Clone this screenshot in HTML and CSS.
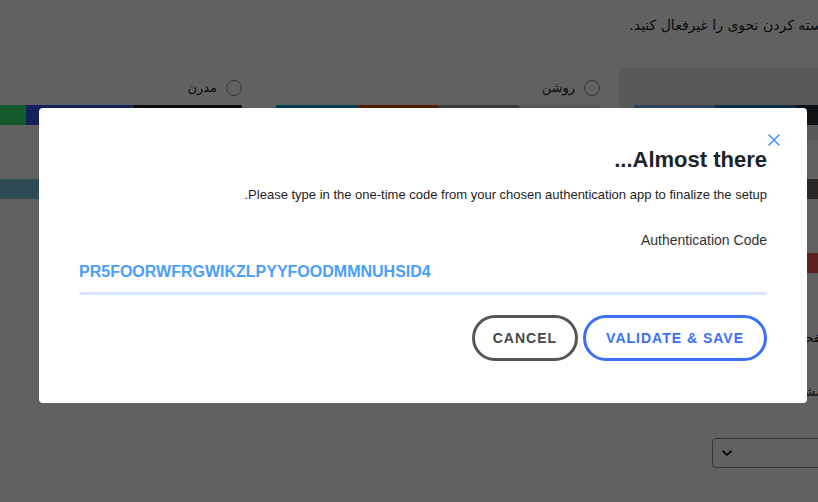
FILE: index.html
```html
<!DOCTYPE html>
<html lang="fa">
<head>
<meta charset="utf-8">
<title>شناسنامه</title>
<link rel="stylesheet" href="styles.css">
</head>
<body>
<div class="page" dir="rtl">
  <div class="text-row syntax-row">
    <span class="checkbox"></span>
    <span>هنگام ویرایش کد، برجسته کردن نحوی را غیرفعال کنید.</span>
  </div>

  <div class="color-picker">
    <div class="color-option selected">
      <div class="option-head"><span class="radio"></span><span>پیش‌فرض</span></div>
      <div class="palette fresh"><span></span><span></span><span></span><span></span></div>
    </div>
    <div class="color-option">
      <div class="option-head"><span class="radio"></span><span>روشن</span></div>
      <div class="palette light"><span></span><span></span><span></span><span></span></div>
    </div>
    <div class="color-option">
      <div class="option-head"><span class="radio"></span><span>مدرن</span></div>
      <div class="palette modern"><span></span><span></span><span></span></div>
    </div>
    <div class="color-option">
      <div class="option-head"><span class="radio"></span><span>قهوه‌ای</span></div>
      <div class="palette coffee"><span></span><span></span><span></span><span></span></div>
    </div>
    <div class="color-option">
      <div class="option-head"><span class="radio"></span><span>اکتوپلاسم</span></div>
      <div class="palette ectoplasm"><span></span><span></span><span></span><span></span></div>
    </div>
    <div class="color-option">
      <div class="option-head"><span class="radio"></span><span>نیمه‌شب</span></div>
      <div class="palette midnight"><span></span><span></span><span></span><span></span></div>
    </div>
    <div class="color-option">
      <div class="option-head"><span class="radio"></span><span>طلوع</span></div>
      <div class="palette sunrise"><span></span><span></span><span></span><span></span></div>
    </div>
  </div>

  <div class="text-row shortcuts-row">
    <span class="checkbox"></span>
    <span>فعال کردن میانبرهای صفحه‌کلید برای مدیریت دیدگاه‌ها.</span>
  </div>

  <div class="text-row toolbar-row">
    <span class="checkbox"></span>
    <span>نمایش نوار ابزار هنگام مشاهدهٔ سایت</span>
  </div>

  <div class="lang-row">
    <div class="select">
      <span class="select-value">فارسی</span>
      <svg class="select-arrow" width="12" height="8" viewBox="0 0 12 8" aria-hidden="true">
        <path d="M1.5 1.8 L6 6 L10.5 1.8" fill="none" stroke="#1d2327" stroke-width="2"/>
      </svg>
    </div>
  </div>
</div>

<div class="backdrop"></div>

<div class="modal" dir="rtl">
  <button class="modal-close" aria-label="Close">
    <svg width="14" height="14" viewBox="0 0 14 14" aria-hidden="true">
      <path d="M1.5 1.5 L12.5 12.5 M12.5 1.5 L1.5 12.5" stroke="#4a9df2" stroke-width="1.7" fill="none"/>
    </svg>
  </button>
  <h2 class="modal-title">Almost there...</h2>
  <p class="modal-desc">Please type in the one-time code from your chosen authentication app to finalize the setup.</p>
  <div class="field">
    <label for="code">Authentication Code</label>
    <input id="code" type="text" value="PR5FOORWFRGWIKZLPYYFOODMMNUHSID4">
  </div>
  <div class="actions">
    <button class="btn btn-primary">Validate &amp; Save</button>
    <button class="btn btn-cancel">Cancel</button>
  </div>
</div>
</body>
</html>
```
FILE: styles.css
```css
html, body {
  margin: 0;
  height: 100%;
  overflow: hidden;
}

body {
  background: #fff;
  font-family: "DejaVu Sans", sans-serif;
  font-size: 13px;
  color: #1d2327;
}

/* underlying RTL profile page (partly scrolled out of view) */
.page {
  width: 1070px;
  margin-left: -97px;
  direction: rtl;
}

.text-row {
  display: flex;
  align-items: center;
  gap: 6px;
  height: 20px;
  line-height: 20px;
  padding-right: 2px;
}

.checkbox {
  width: 16px;
  height: 16px;
  box-sizing: border-box;
  border: 1px solid #8c8f94;
  border-radius: 4px;
  background: #fff;
  flex: none;
}

.syntax-row {
  margin-top: 15px;
  font-size: 14px;
  padding-right: 0;
}

.color-picker {
  margin-top: 33px;
  display: flex;
  flex-wrap: wrap;
  gap: 2px 4px;
}

.color-option {
  width: 354px;
  box-sizing: border-box;
  padding: 5px 15px 15px;
}

.color-option.selected {
  background: #e6e6e6;
}

.option-head {
  height: 29px;
  display: flex;
  align-items: center;
  gap: 9px;
}

.radio {
  width: 16px;
  height: 16px;
  box-sizing: border-box;
  border: 1px solid #8c8f94;
  border-radius: 50%;
  background: #fff;
  flex: none;
}

.palette {
  display: flex;
  height: 20px;
  margin-top: 3px;
}

.palette span {
  flex: 1;
}

.fresh span:nth-child(1) { background: #1d2327; }
.fresh span:nth-child(2) { background: #2c3338; }
.fresh span:nth-child(3) { background: #2271b1; }
.fresh span:nth-child(4) { background: #72aee6; }

.light span:nth-child(1) { background: #e5e5e5; }
.light span:nth-child(2) { background: #999999; }
.light span:nth-child(3) { background: #d64e07; }
.light span:nth-child(4) { background: #04a4cc; }

.modern span:nth-child(1) { background: #1e1e1e; }
.modern span:nth-child(2) { background: #3858e9; }
.modern span:nth-child(3) { background: #33f078; }

.coffee span:nth-child(1) { background: #46403c; }
.coffee span:nth-child(2) { background: #6e6762; }
.coffee span:nth-child(3) { background: #c7a589; }
.coffee span:nth-child(4) { background: #9ea476; }

.ectoplasm span:nth-child(1) { background: #413256; }
.ectoplasm span:nth-child(2) { background: #523f6d; }
.ectoplasm span:nth-child(3) { background: #a3b745; }
.ectoplasm span:nth-child(4) { background: #d46f15; }

.midnight span:nth-child(1) { background: #25282b; }
.midnight span:nth-child(2) { background: #363b3f; }
.midnight span:nth-child(3) { background: #79c3d8; }
.midnight span:nth-child(4) { background: #e14d43; }

.sunrise span:nth-child(1) { background: #b43c38; }
.sunrise span:nth-child(2) { background: #f05555; }
.sunrise span:nth-child(3) { background: #dd823b; }
.sunrise span:nth-child(4) { background: #ccaf0b; }

.shortcuts-row {
  margin-top: 40px;
}

.toolbar-row {
  margin-top: 34px;
}

.lang-row {
  margin-top: 36px;
}

.select {
  width: 261px;
  height: 30px;
  box-sizing: border-box;
  border: 1px solid #8c8f94;
  border-radius: 4px;
  background: #fff;
  display: flex;
  align-items: center;
  justify-content: space-between;
  padding: 0 10px 0 8px;
}

.select-arrow {
  display: block;
}

/* modal */
.backdrop {
  position: fixed;
  inset: 0;
  background: rgba(0, 0, 0, 0.62);
}

.modal {
  position: fixed;
  left: 39px;
  top: 108px;
  width: 768px;
  box-sizing: border-box;
  padding: 39px 40px 42px;
  background: #fff;
  border-radius: 4px;
  font-family: "Liberation Sans", Arial, sans-serif;
  direction: rtl;
  text-align: right;
}

.modal-close {
  position: absolute;
  top: 25px;
  right: 26px;
  width: 14px;
  height: 14px;
  padding: 0;
  border: 0;
  background: none;
  cursor: pointer;
}

.modal-close svg {
  display: block;
}

.modal-title {
  margin: 0;
  font-size: 22px;
  line-height: 26px;
  font-weight: 700;
  color: #1d2327;
}

.modal-desc {
  margin: 14px 0 0;
  font-size: 13px;
  line-height: 15px;
  color: #1e1e1e;
}

.field {
  margin-top: 30px;
}

.field label {
  display: block;
  font-size: 14px;
  line-height: 16px;
  color: #333;
  margin-bottom: 3px;
}

.field input {
  display: block;
  width: 100%;
  box-sizing: border-box;
  height: 44px;
  padding: 0;
  border: 0;
  border-bottom: 3px solid #d6e6fd;
  border-radius: 3px;
  background: transparent;
  font-family: "Liberation Sans", Arial, sans-serif;
  font-size: 16px;
  font-weight: 700;
  color: #4a9efc;
  direction: ltr;
  text-align: left;
  outline: none;
}

.actions {
  margin-top: 20px;
  display: flex;
  gap: 5px;
}

.btn {
  height: 46px;
  box-sizing: border-box;
  padding: 0 18px;
  border: 3px solid;
  border-radius: 23px;
  background: #fff;
  font-family: "Liberation Sans", Arial, sans-serif;
  font-size: 14px;
  font-weight: 700;
  letter-spacing: 1px;
  text-transform: uppercase;
  cursor: pointer;
}

.btn-cancel {
  border-color: #565656;
  color: #474747;
}

.btn-primary {
  padding: 0 20px;
  border-color: #3c6ff6;
  color: #3c6ff6;
}
```
